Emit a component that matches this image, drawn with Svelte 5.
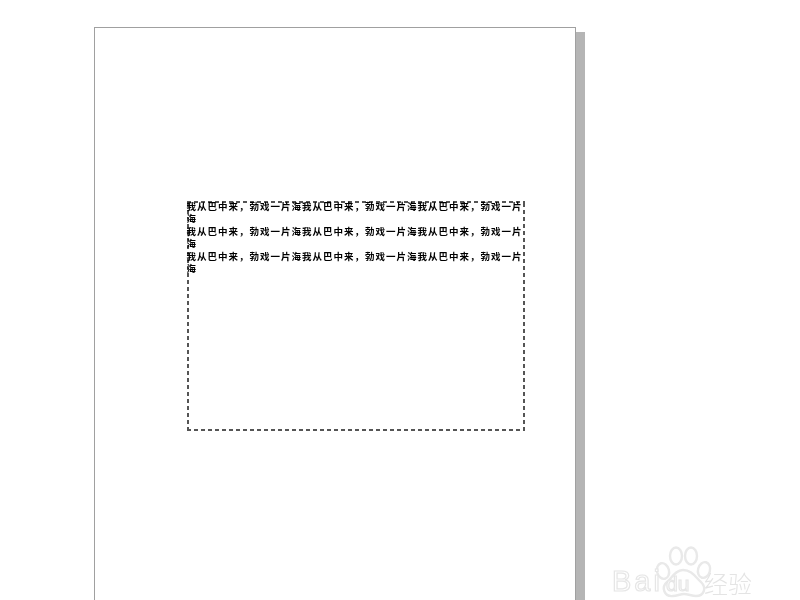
<script>
  const line = '我从巴中来，勃戏一片海我从巴中来，勃戏一片海我从巴中来，勃戏一片海';
  const paragraphs = [line, line, line];
</script>

<div class="canvas">
  <div class="page">
    <div class="frame">
      {#each paragraphs as text}
        <p>{text}</p>
      {/each}
    </div>
  </div>

  <div class="watermark">
    <svg class="paw" width="60" height="54" viewBox="0 0 60 54">
      <g fill="#fff" stroke="#e9e9e9" stroke-width="2.4">
        <ellipse cx="9" cy="25" rx="6" ry="8" transform="rotate(-15 9 25)" />
        <ellipse cx="22" cy="10" rx="6" ry="8.5" />
        <ellipse cx="37" cy="10" rx="6" ry="8.5" />
        <ellipse cx="50" cy="24" rx="6" ry="8" transform="rotate(15 50 24)" />
        <path d="M29 24c-8 0-11 8-16 12-6 5-3 15 6 14 4 0 7-2 11-2s8 2 12 2c8 0 11-8 5-14-5-4-9-12-18-12z" />
      </g>
    </svg>
    <span class="bai">Bai</span>
    <span class="du">du</span>
    <span class="jy">经验</span>
  </div>
</div>

<style>
  :global(body) {
    margin: 0;
    background: #fff;
  }

  .canvas {
    position: relative;
    width: 800px;
    height: 600px;
    overflow: hidden;
    padding: 27px 0 0 94px;
    box-sizing: border-box;
    background: #fff;
  }

  .page {
    width: 482px;
    height: 640px;
    box-sizing: border-box;
    border: 1.5px solid #a0a0a0;
    box-shadow: 9px 5px 0 #b5b5b5;
    background: #fff;
    padding: 172.5px 0 0 91.5px;
  }

  .frame {
    display: flow-root;
    width: 338px;
    height: 230px;
    box-sizing: border-box;
    background:
      repeating-linear-gradient(90deg, #555 0 4px, transparent 4px 7px) top left / 100% 2px no-repeat,
      repeating-linear-gradient(90deg, #555 0 4px, transparent 4px 7px) bottom left / 100% 2px no-repeat,
      repeating-linear-gradient(0deg, #555 0 4px, transparent 4px 7px) top left / 2px 100% no-repeat,
      repeating-linear-gradient(0deg, #555 0 4px, transparent 4px 7px) top right / 2px 100% no-repeat;
  }

  p {
    margin: 0;
    font-family: "Noto Sans CJK SC", sans-serif;
    font-size: 9.5px;
    letter-spacing: 1px;
    line-height: 12.5px;
    color: #000;
    font-weight: 700;
    filter: blur(0.4px);
    width: 337px;
  }

  p:first-child {
    margin-top: -1px;
  }

  .watermark {
    position: absolute;
    left: 610px;
    top: 546px;
    width: 150px;
    height: 54px;
    font-family: "Liberation Sans", "Noto Sans CJK SC", sans-serif;
    color: #fff;
    -webkit-text-stroke: 1.2px #e6e6e6;
    filter: blur(0.6px);
  }

  .paw {
    position: absolute;
    left: 44px;
    top: 0;
  }

  .bai,
  .du,
  .jy {
    position: absolute;
    line-height: 1;
  }

  .bai {
    left: 2px;
    top: 21px;
    font-size: 29px;
    letter-spacing: 3px;
  }

  .du {
    left: 56px;
    top: 27px;
    font-size: 21px;
  }

  .jy {
    left: 94px;
    top: 25px;
    font-size: 24px;
    font-family: "Noto Sans CJK SC", sans-serif;
    font-weight: 300;
    -webkit-text-stroke: 0;
    color: #e4e4e4;
  }
</style>
